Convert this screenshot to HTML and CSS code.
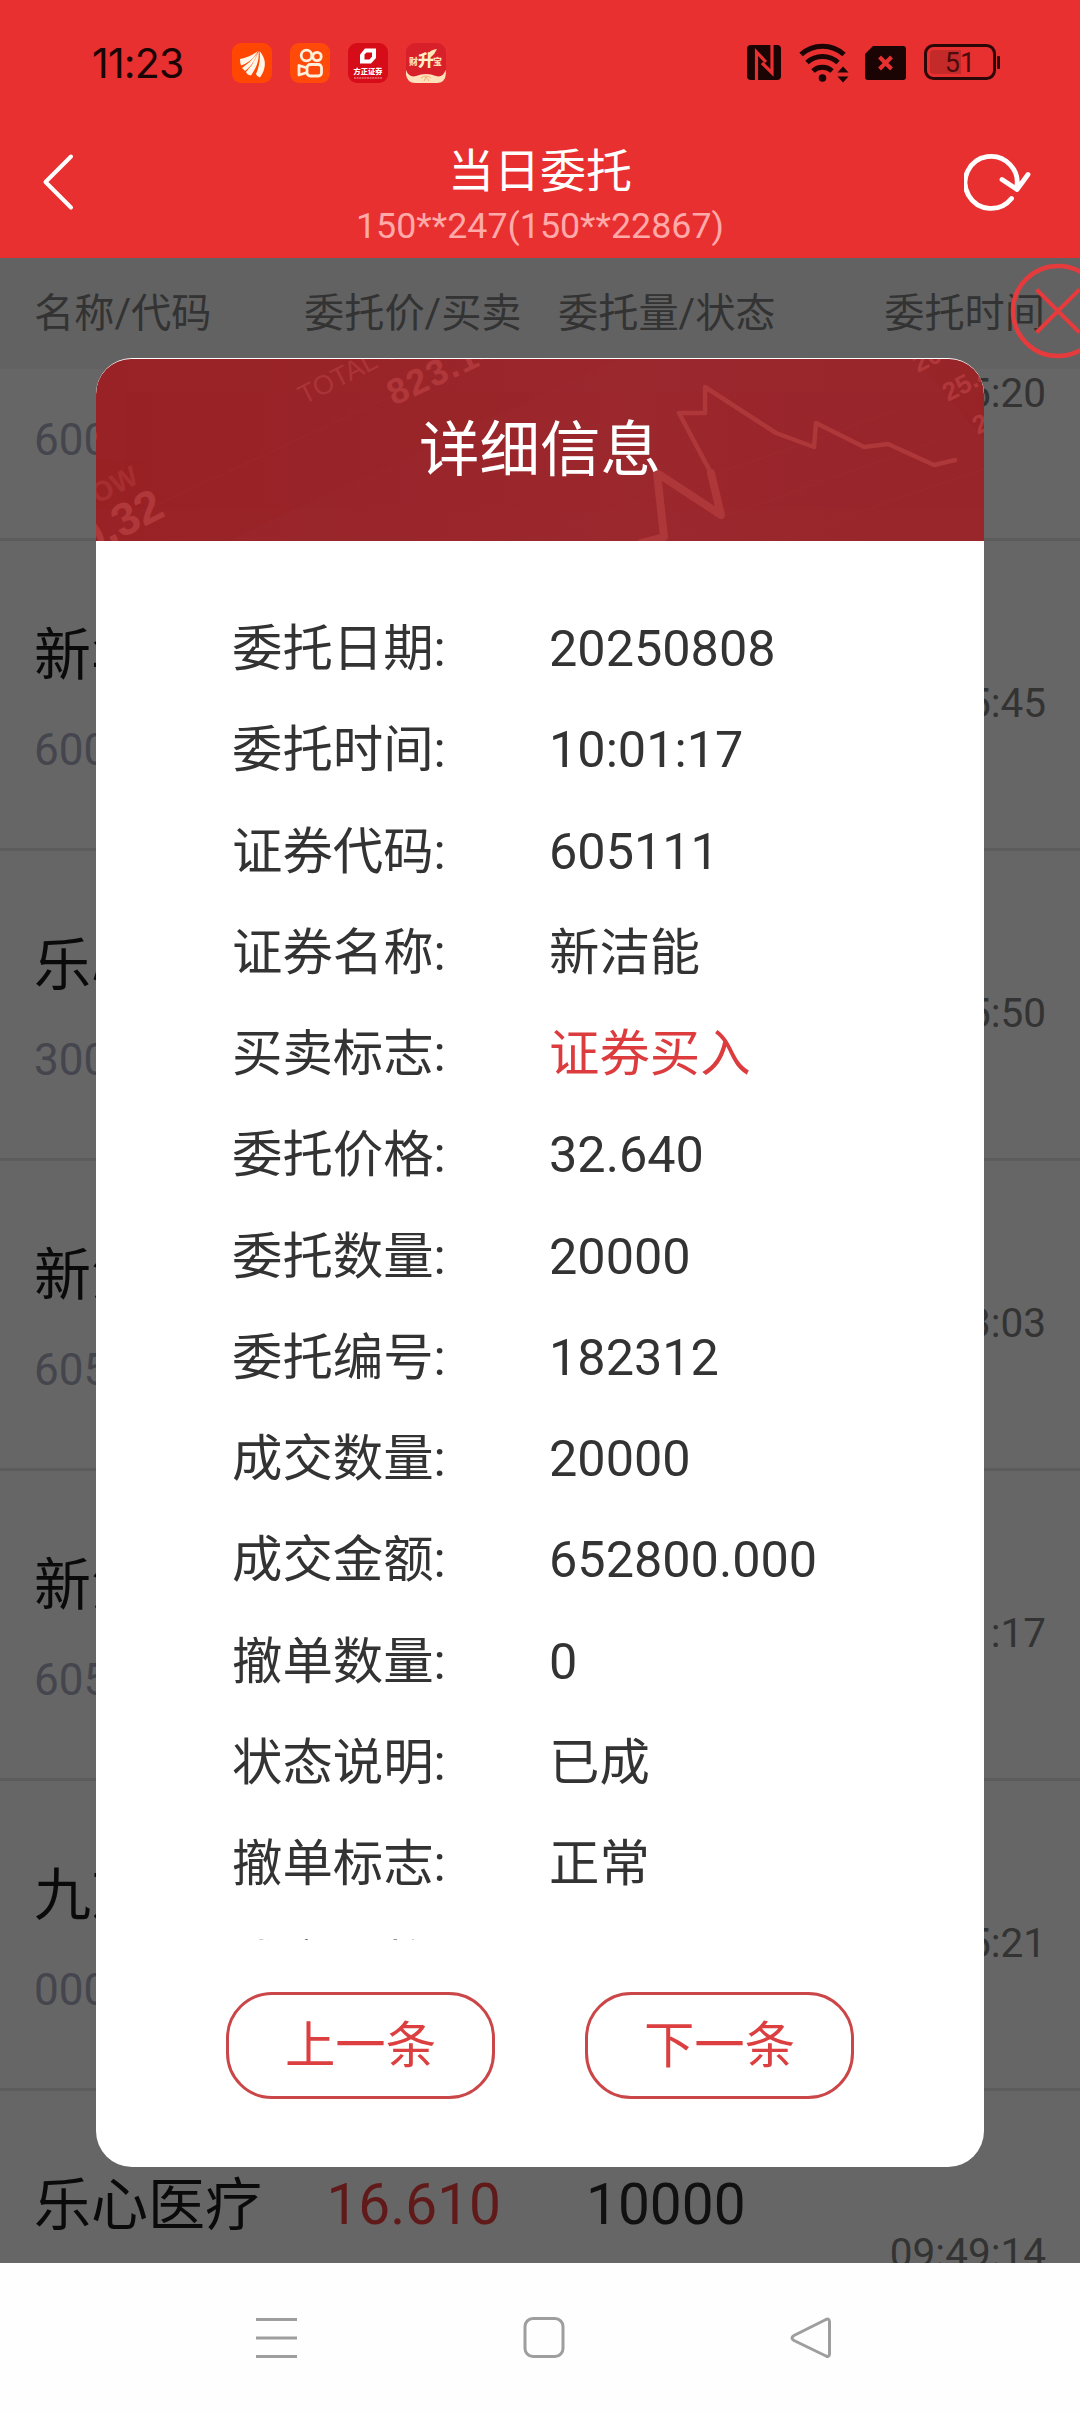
FILE: index.html
```html
<!DOCTYPE html>
<html lang="zh-CN">
<head>
<meta charset="utf-8">
<title>当日委托</title>
<link rel="stylesheet" href="styles.css">
</head>
<body>
<header class="top">
  <div class="status">
    <span class="clock">11:23</span>
    <div class="apps">
      <svg viewBox="0 0 40 40"><rect width="40" height="40" rx="9" fill="#ff4603"/><path d="M8 16Q18 14 26 8Q20 19 9 22.500Q8 20 8 16ZM14 29Q23 20 26.500 8Q28 20 19 32.500Q15 32 14 29ZM24 31Q29 20 27.500 8Q38 20 28 34.500Q25 34 24 31ZM10 25Q19 19 25.500 10Q22 21 13 28Z" fill="#fff6e8"/></svg>
      <svg viewBox="0 0 40 40" fill="none" stroke="#fff0dc" stroke-width="2.800"><rect width="40" height="40" rx="9" fill="#ff4a0a" stroke="none"/><circle cx="16.500" cy="12.500" r="5.300"/><circle cx="27" cy="13.500" r="4.200"/><rect x="17" y="21.500" width="14.500" height="11.500" rx="3.200"/><path d="M17 25L9 22.500V32L17 29.500" stroke-linejoin="round"/></svg>
      <svg viewBox="0 0 40 40"><rect width="40" height="40" rx="9" fill="#d60c18"/><path d="M17 5.500H28V15L23 20.500H12V11.500Z" fill="#fff"/><path d="M18.500 9.500H24V13.500L21.500 16.500H16.500V11.500Z" fill="#d60c18"/><text x="20" y="31" text-anchor="middle" class="tiny-bold" fill="#fff">方正证券</text><path d="M6 35H34" stroke="#f3a0a4" stroke-width="1.200" stroke-dasharray="2 .6"/></svg>
      <svg viewBox="0 0 40 40"><rect width="40" height="40" rx="9" fill="#d8202a"/><path d="M0 27Q3 35 10 33Q20 29 30 33Q37 35 39.500 27Q41 34 37 38Q35 40 31 40H9Q5 40 3 38Q-1 34 0 27Z" fill="#ffe2bc"/><path d="M15 35Q20 31 25 35M18 38L20 34L23 38" fill="none" stroke="#efaf75"/><text x="3" y="22" class="small-bold" fill="#ffdcb0">财</text><text x="12" y="23" class="mid-bold" fill="#fff0c8">升</text><text x="27" y="22" class="small-bold" fill="#ffdcb0">宝</text><path d="M22 12Q23 7 31 6Q29 11 24 15Z" fill="#ffe8b5"/></svg>
    </div>
    <div class="signals">
      <svg width="34" height="35" viewBox="0 0 34 35"><rect width="34" height="35" rx="4" fill="#1a0404"/><path d="M9.500 35V7L19 17M25 0V28L15 18" fill="none" stroke="#e83031" stroke-width="3.200"/></svg>
      <svg width="50" height="40" viewBox="0 0 50 40" fill="none" stroke="#1a0404" stroke-width="5"><path d="M2 11.500A32 32 0 0 1 45 11.500M8 19.500A23 23 0 0 1 39 19.500M14 28A14 14 0 0 1 33 28"/><circle cx="23.500" cy="35" r="3.800" fill="#1a0404" stroke="none"/><path d="M38.500 29.500L44 23.500L49.500 29.500ZM38.500 33.500L44 39.500L49.500 33.500Z" fill="#1a0404" stroke="none"/></svg>
      <svg class="sim" width="41" height="34" viewBox="0 0 41 34"><path d="M8 0H38Q41 0 41 3V31Q41 34 38 34H3Q0 34 0 31V8Z" fill="#1a0404"/><path d="M14.500 11L26.500 23M26.500 11L14.500 23" stroke="#e83031" stroke-width="4"/></svg>
      <svg width="76" height="37" viewBox="0 0 76 37"><rect x="1.500" y="1.500" width="69" height="33" rx="8" fill="none" stroke="#2c0707" stroke-width="3"/><path d="M10 6H37V30H10Q6 30 6 26V10Q6 6 10 6Z" fill="#c52a2a"/><rect x="73" y="12" width="3" height="13" rx="1" fill="#2c0707"/><text x="36" y="28" text-anchor="middle" class="battery">51</text></svg>
    </div>
  </div>
  <div class="titlebar">
    <svg class="back" width="34" height="60" viewBox="0 0 34 60"><path d="M30 4.500L4.500 30L30 55.500" fill="none" stroke="#fff" stroke-width="4" stroke-linecap="round" stroke-linejoin="round"/></svg>
    <div class="titles"><h1>当日委托</h1><p>150**247(150**22867)</p></div>
    <svg class="refresh" width="68" height="60" viewBox="0 0 68 60"><path d="M47.500 46.500A26 26 0 1 1 52.500 36M38 27.500L53 37.500L64 22.500" fill="none" stroke="#fff" stroke-width="4.800" stroke-linecap="round" stroke-linejoin="round"/></svg>
  </div>
</header>

<main class="page">
  <div class="cols"><span class="c1">名称/代码</span><span class="c2">委托价/买卖</span><span class="c3">委托量/状态</span><span class="c4">委托时间</span></div>
  <div class="orders">
    <div class="row first"><div class="stock"><b>新华</b><i>600</i></div><time>09:35:20</time></div>
    <div class="row"><div class="stock"><b>新华</b><i>600</i></div><time>10:15:45</time></div>
    <div class="row"><div class="stock"><b>乐心医疗</b><i>300562</i></div><time>10:05:50</time></div>
    <div class="row"><div class="stock"><b>新洁能</b><i>605111</i></div><time>10:03:03</time></div>
    <div class="row"><div class="stock"><b>新洁能</b><i>605111</i></div><time>10:01:17</time></div>
    <div class="row"><div class="stock"><b>九芝堂</b><i>000989</i></div><time>09:55:21</time></div>
    <div class="row"><div class="stock"><b>乐心医疗</b><i>300562</i></div><span class="price">16.610</span><span class="qty">10000</span><time>09:49:14</time></div>
  </div>
  <div class="mask"></div>
  <svg class="close" width="96" height="96" viewBox="0 0 96 96" fill="none" stroke="#e63b3d"><circle cx="48" cy="48" r="45" stroke-width="4.500"/><path d="M26.500 26.500L69.500 69.500M69.500 26.500L26.500 69.500" stroke-width="4"/></svg>

  <section class="dialog">
    <div class="banner">
      <svg class="art" viewBox="0 0 888 182">
        <defs><linearGradient id="g" x1="0" y1="0" x2="1" y2="0"><stop offset="0" stop-color="#982225"/><stop offset=".6" stop-color="#9b272c"/><stop offset="1" stop-color="#972427"/></linearGradient></defs>
        <rect width="888" height="182" fill="url(#g)"/>
        <path d="M130 182L520 0H820L888 80V182Z" fill="#9d2c31" opacity=".3"/>
        <path d="M30 160L300 35M430 182L800 52M560 182L840 82M680 182L888 110" stroke="#a13035" opacity=".35"/>
        <g fill="#b0383b">
          <text class="art-thin" transform="translate(208 46) rotate(-27)">TOTAL VALUE</text>
          <text class="art-num" transform="translate(298 47) rotate(-25)">823.14</text>
          <text class="art-low" transform="translate(-14 153) rotate(-27)">LOW</text>
          <text class="art-big" transform="translate(-9 197) rotate(-27)">0.32</text>
          <text class="art-big" transform="translate(-17 92) rotate(-28)">5</text>
          <text class="art-side" transform="translate(822 14) rotate(-27)">20.</text>
          <text class="art-side" transform="translate(852 43) rotate(-27)">25.4</text>
          <text class="art-side" transform="translate(882 76) rotate(-27)">2</text>
        </g>
        <g fill="none" stroke="#ae3739" stroke-linejoin="round" stroke-linecap="round"><path d="M545 184L568 178L561 114L625 156L615 114" stroke-width="8"/><path d="M625 156Q622 132 615 114L583 54H609V28L680 74L718 88L720 64L768 88L792 85L838 106L859 101" stroke-width="4.500"/></g>
      </svg>
      <h2>详细信息</h2>
    </div>
    <dl class="fields">
      <dt>委托日期:</dt><dd>20250808</dd>
      <dt>委托时间:</dt><dd>10:01:17</dd>
      <dt>证券代码:</dt><dd>605111</dd>
      <dt>证券名称:</dt><dd>新洁能</dd>
      <dt>买卖标志:</dt><dd class="buy">证券买入</dd>
      <dt>委托价格:</dt><dd>32.640</dd>
      <dt>委托数量:</dt><dd>20000</dd>
      <dt>委托编号:</dt><dd>182312</dd>
      <dt>成交数量:</dt><dd>20000</dd>
      <dt>成交金额:</dt><dd>652800.000</dd>
      <dt>撤单数量:</dt><dd>0</dd>
      <dt>状态说明:</dt><dd>已成</dd>
      <dt>撤单标志:</dt><dd>正常</dd>
      <dt>成交价格:</dt><dd>32.640</dd>
    </dl>
    <div class="actions"><button>上一条</button><button>下一条</button></div>
  </section>
</main>

<nav class="nav">
  <svg width="42" height="42" viewBox="0 0 42 42"><path d="M0 2.500H41M0 21H41M0 39.500H41"/></svg>
  <svg width="42" height="42" viewBox="0 0 42 42"><rect x="2" y="1.500" width="38" height="38" rx="8"/></svg>
  <svg width="42" height="42" viewBox="0 0 42 42"><path d="M36 2.500L4 18.500Q0 21 4 23.500L36 39Q39.500 40.500 39.500 37V5Q39.500 1 36 2.500Z"/></svg>
</nav>
</body>
</html>
```
FILE: styles.css
```css
* { box-sizing: border-box; margin: 0; padding: 0; }
body {
  width: 1080px;
  height: 2412px;
  overflow: hidden;
  display: flex;
  flex-direction: column;
  font-family: Roboto, "Noto Sans CJK SC", sans-serif;
  background: #fff;
}
svg { display: block; flex: none; }
h1, h2, b, i { font-weight: 400; font-style: normal; }

.top { height: 258px; background: #e83031; color: #fff; }
.status { height: 124px; display: flex; align-items: center; padding: 1px 80px 0 92px; }
.clock { width: 140px; font: 400 41px/50px Inter, sans-serif; letter-spacing: -.8px; color: #1a0404; }
.apps { display: flex; gap: 18px; }
.apps svg { width: 40px; height: 40px; }
.signals { margin-left: auto; display: flex; align-items: center; gap: 18px; }
.sim { margin-left: -2px; }
.tiny-bold { font: 900 7.200px "Noto Sans CJK SC", sans-serif; }
.small-bold { font: 900 9px "Noto Sans CJK SC", sans-serif; }
.mid-bold { font: 900 16px "Noto Sans CJK SC", sans-serif; }
.battery { font: 400 27px Roboto, sans-serif; fill: #4a0c0c; }

.titlebar { display: flex; justify-content: space-between; align-items: flex-start; padding: 17px 48px 0 41px; }
.back, .refresh { margin-top: 11px; }
.titles { flex: 1; text-align: center; padding-left: 41px; }
.titles h1 { font-size: 46px; line-height: 60px; }
.titles p { font-size: 35.800px; line-height: 44px; margin-top: 3px; color: #ffa9a9; }

.page { position: relative; height: 2005px; overflow: hidden; display: flex; flex-direction: column; }
.cols { height: 111px; flex: none; background: #f5f5f5; color: #808080; font-size: 40.200px; line-height: 112px; display: flex; padding: 0 35px 0 34px; }
.c1 { width: 270px; }
.c2 { width: 254px; }
.c4 { margin-left: auto; }
.orders { flex: 1; overflow: hidden; }
.row { height: 310px; border-bottom: 3px solid #e6e6e6; display: flex; align-items: flex-start; padding: 82px 34px 0 34px; }
.first { margin-top: -138px; }
.stock { width: 266px; line-height: 66px; }
.stock b { display: block; font-size: 57px; color: #1a1a1a; white-space: nowrap; }
.first b { position: relative; top: -1px; }
.stock i { display: block; font-size: 44px; margin-top: 28px; color: #aaacc0; }
.price, .qty { font-size: 56.800px; line-height: 64px; }
.price { width: 201px; text-align: right; color: #f04141; }
.qty { margin-left: 85px; color: #2b2b2b; }
.row time { margin-left: auto; font-size: 40.500px; line-height: 50px; margin-top: 55px; color: #808080; }
.mask { position: absolute; inset: 0; background: rgba(0, 0, 0, .6); }
.close { position: absolute; left: 1010px; top: 5px; }

.dialog { position: absolute; left: 96px; top: 100px; width: 888px; height: 1809px; padding-top: 1px; background: #fff; border-radius: 36px; overflow: hidden; }
.banner { position: relative; height: 182px; border-radius: 35px 35px 0 0; overflow: hidden; }
.art { width: 888px; height: 182px; }
.art-thin { font: 27px "Liberation Sans", sans-serif; opacity: .8; }
.art-num { font: 700 36px "Liberation Sans", sans-serif; letter-spacing: 1.500px; }
.art-low { font: 700 28px "Liberation Sans", sans-serif; opacity: .6; }
.art-big { font: 700 46px "Liberation Sans", sans-serif; }
.art-side { font: 700 26px "Liberation Sans", sans-serif; }
.banner h2 { position: absolute; inset: 0; text-align: center; color: #fff; font-size: 60.500px; line-height: 183px; }
.fields { margin-top: 57px; height: 1342px; overflow: hidden; padding-left: 136px; display: grid; grid-template-columns: 317px 1fr; grid-auto-rows: 101.270px; align-content: start; font-size: 50.400px; line-height: 102px; color: #333; }
.buy { color: #dc3c3e; }
.actions { display: flex; justify-content: center; gap: 90px; margin-top: 52px; }
.actions button { width: 269px; height: 107px; border: 3px solid #cb4648; border-radius: 46px; background: #fff; color: #dc3f40; font: 50.400px/98px Roboto, "Noto Sans CJK SC", sans-serif; }

.nav { height: 149px; display: flex; align-items: center; justify-content: space-between; padding: 0 248px 0 256px; background: #fefefe; }
.nav svg { fill: none; stroke: #9e9e9e; stroke-width: 3; }
```
